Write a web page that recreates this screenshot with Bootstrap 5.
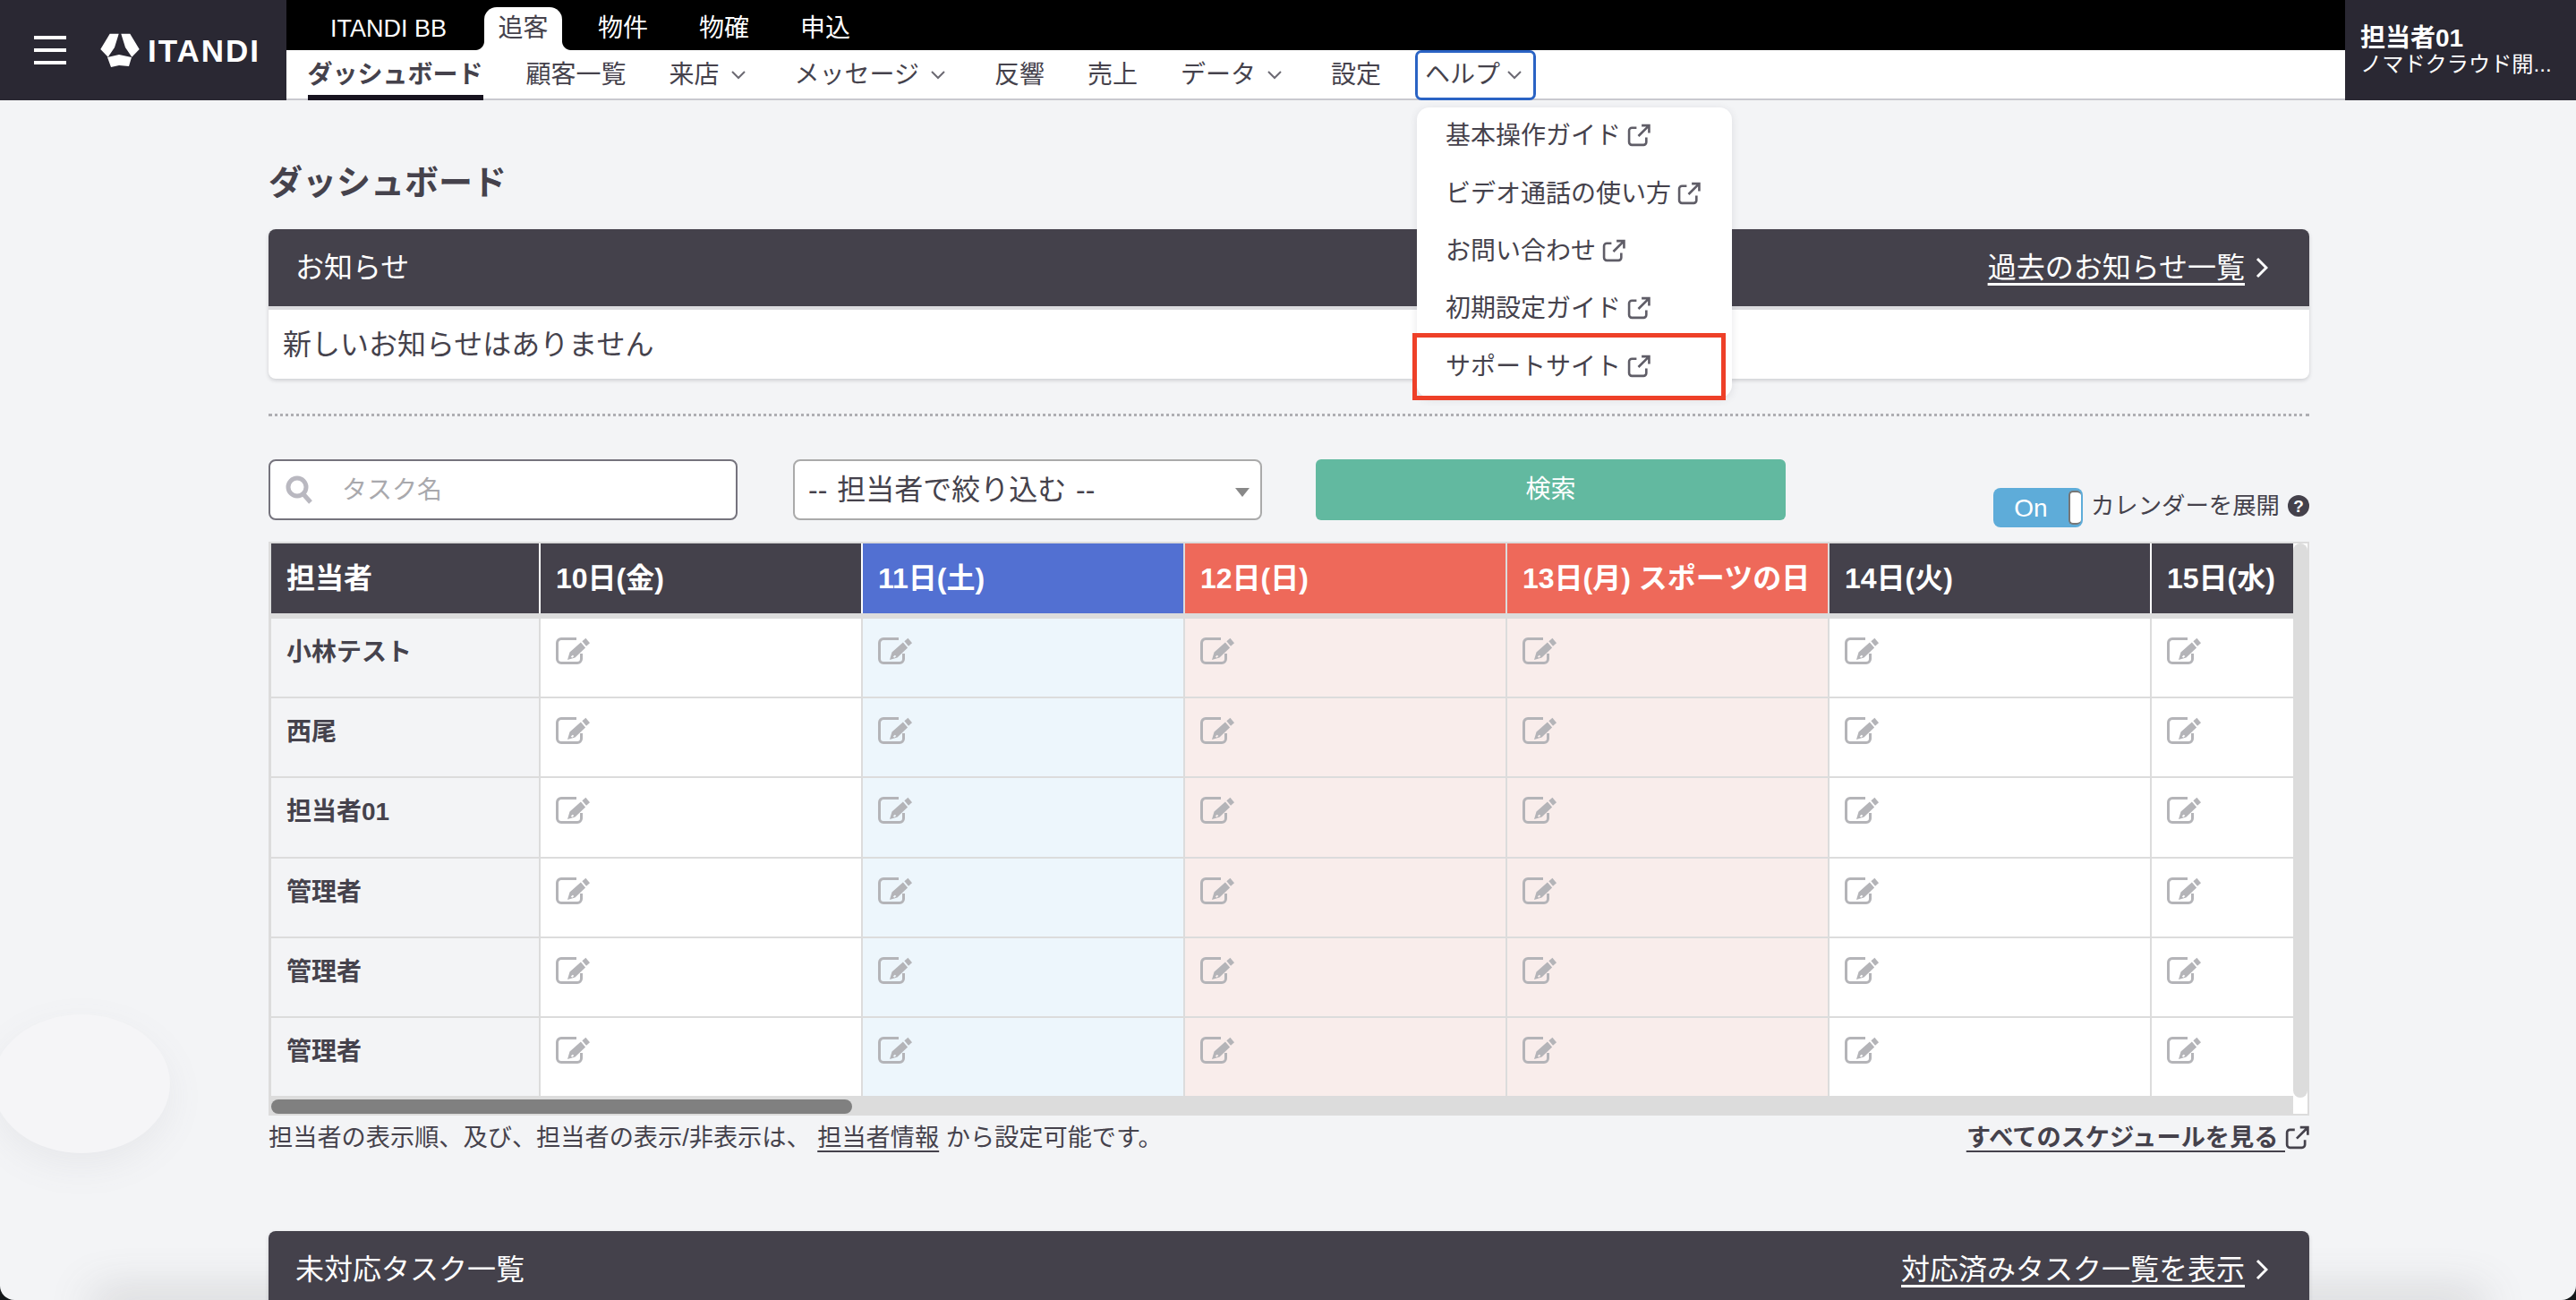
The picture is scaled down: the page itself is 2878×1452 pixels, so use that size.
<!doctype html>
<html lang="ja">
<head>
<meta charset="utf-8">
<title>ITANDI</title>
<link rel="stylesheet" href="https://cdn.jsdelivr.net/npm/bootstrap@5.3.0/dist/css/bootstrap.min.css">
<style>
html,body{height:100%;}
body{background:#f3f4f6;color:#45424c;font-family:"Liberation Sans","Noto Sans CJK JP",sans-serif;font-size:32px;line-height:1.4;overflow:hidden;position:relative;}
a{color:inherit;}
.app-top{height:112px;position:relative;z-index:1;}
.brand-side{width:320px;background:#2a2833;padding-left:38px;gap:38px;}
.burger{width:36px;height:32px;display:flex;flex-direction:column;justify-content:space-between;}
.burger i{display:block;height:4px;background:#fff;}
.logo-word{color:#fff;font-weight:700;font-size:35px;letter-spacing:2px;line-height:1;margin-left:9px;}
.nav-mid{min-width:0;}
.tier-one{height:56px;background:#000;}
.tier-one a{color:#fff;text-decoration:none;font-size:28px;height:48px;display:flex;align-items:center;line-height:1;white-space:nowrap;}
.tier-one .first-tab{font-size:27px;margin-left:49px;margin-right:42px;}
.tier-one a.on-tab{background:#fff;color:#45424c;border-radius:14px 14px 0 0;padding:0 15.500px;margin-right:40px;position:relative;}
.on-tab::before,.on-tab::after{content:"";position:absolute;bottom:0;width:10px;height:10px;}
.on-tab::before{left:-10px;background:radial-gradient(circle at 0 0,transparent 9.500px,#fff 10.500px);}
.on-tab::after{right:-10px;background:radial-gradient(circle at 100% 0,transparent 9.500px,#fff 10.500px);}
.tier-one .plain-tab{margin-right:57px;}
.tier-two{height:56px;background:#fff;border-bottom:2px solid #c9c9cf;padding-left:23.500px;}
.tier-two a{color:#45424c;text-decoration:none;font-size:28px;line-height:1;display:flex;align-items:center;height:56px;margin-bottom:-2px;white-space:nowrap;}
.tier-two .chev{margin-left:13px;margin-right:7px;}
.tier-two a.now{font-weight:700;border-bottom:6px solid #17131f;padding-top:6px;}
.tier-two a.help-open{border:3px solid #2a63c4;border-radius:7px;padding:0 13px 0 8px;margin-left:-10px;}
.help-open .chev{margin-left:8px !important;margin-right:0 !important;}
.user-side{width:258px;background:#2a2833;color:#fff;padding:29px 16px 0 17px;line-height:1;}
.user-side b{font-size:28px;display:block;}
.user-side span{font-size:24.200px;display:block;margin-top:3px;white-space:nowrap;}
.help-menu{position:absolute;left:1583px;top:120px;width:352px;height:324px;background:#fff;border-radius:14px;box-shadow:0 2px 10px rgba(60,60,70,.12);z-index:5;}
.help-menu a{display:flex;align-items:center;height:64.400px;padding-left:32px;font-size:28px;color:#45424c;text-decoration:none;gap:7px;line-height:1;white-space:nowrap;}
.help-menu a svg{color:#5f5d67;margin-top:-2px;}
.red-mark{position:absolute;left:1578px;top:372px;width:350px;height:75px;border:5px solid #ee4028;z-index:6;pointer-events:none;}
.page-wrap{width:2280px;margin-left:300px;position:relative;z-index:1;}
.page-title{font-size:38px;font-weight:700;line-height:1;margin:0;padding-top:73px;height:144px;}
.dark-panel{border-radius:8px;background:#fff;box-shadow:0 2px 4px rgba(60,60,70,.2);overflow:hidden;}
.panel-head{height:90px;background:#44414b;border-bottom:4px solid #dcdcdf;color:#fff;padding:0 46px 0 30px;}
.panel-head a{color:#fff;text-underline-offset:6px;text-decoration-thickness:3px;}
.panel-head span,.panel-head a{line-height:1;}
.link-with-chev{gap:12px;}
.panel-body-line{height:77px;padding-left:16px;display:flex;align-items:center;line-height:1;}
.dot-rule{border-top:3px dotted #aeaeb2;margin-top:39px;height:0;}
.filter-row{margin-top:48px;height:68px;position:relative;}
.search-box{width:524px;height:68px;border:2.500px solid #75737d;border-radius:8px;background:#fff;padding-left:17px;gap:33px;color:#a9a9ad;font-size:28px;line-height:1;}
.search-box span{margin-top:1px;}
.pick-box{width:524px;height:68px;border:2px solid #aaa;border-radius:8px;background:#fff;margin-left:62px;padding:0 12px 0 15px;font-size:32px;line-height:1;}
.pick-box>span:first-child{word-spacing:2px;}
.pick-arrow{width:0;height:0;border-left:8px solid transparent;border-right:8px solid transparent;border-top:10px solid #888;margin-top:6px;}
.go-btn{width:525px;height:68px;margin-left:60px;background:#62b9a0;border:0;border-radius:6px;color:#fff;font-size:28px;line-height:1;}
.expand-line{position:absolute;right:0;top:32px;height:44px;font-size:26.400px;line-height:1;}
.flip{width:100px;height:44px;background:#5eacd9;border-radius:8px;color:#fff;font-size:28px;margin-right:9px;position:relative;padding:2px 16px 0 0;line-height:1;}
.flip i{position:absolute;right:2px;top:3px;width:14px;height:38px;background:#fff;border:2px solid #777;border-right:0;border-radius:5px;}
.label-up{margin-bottom:3px;}
.q-mark{width:24px;height:24px;border-radius:50%;background:#44414b;color:#fff;font-size:19px;font-weight:700;margin-left:9px;margin-bottom:4px;line-height:1;}
.sched-frame{margin-top:24px;height:641px;border:3px solid #dcdcdc;border-right-width:2px;border-top-width:2px;border-bottom-width:2px;background:#dcdcdc;position:relative;overflow:hidden;}
.sched-grid{display:grid;grid-template-columns:301px repeat(6,360px);width:2461px;height:619px;grid-template-rows:84px repeat(6,89.200px);}
.hc{height:78px;color:#fff;font-weight:700;font-size:32px;display:flex;align-items:center;padding-left:17px;border-right:2px solid #fff;line-height:1;white-space:nowrap;background:#44414b;}
.hc.sat{background:#5270d2;border-right-color:#dcdcdc;}
.hc.hol{background:#ee695a;border-right-color:#dcdcdc;}
.bc{border-right:2px solid #dcdcdc;border-bottom:2px solid #dcdcdc;background:#fff;padding:21px 0 0 17px;line-height:1;}
.bc svg{display:block;}
.bc.who{background:#f3f4f6;font-size:28px;font-weight:700;padding-top:24px;}
.bc.sat{background:#edf6fc;}
.bc.hol{background:#f9edeb;}
.rail-back{position:absolute;right:0;top:0;bottom:0;width:16px;background:#fff;}
.rail-y{position:absolute;right:0;top:0;bottom:18px;width:16px;background:#dcdcdc;border-radius:8px;}
.rail-x{position:absolute;left:0;right:16px;bottom:0;height:18px;background:#dcdcdc;border-radius:0 9px 9px 0;}
.rail-x i{position:absolute;left:0;top:2px;width:649px;height:16px;background:#808080;border-radius:8px;}
.note-line{height:42px;font-size:27.200px;line-height:1;margin-top:4px;}
.note-line a{text-underline-offset:5px;text-decoration-thickness:2px;}
.next-panel{margin-top:83px;border-radius:8px 8px 0 0;}
.blob{position:absolute;left:-8px;top:1133px;width:198px;height:155px;background:#f5f5f7;border-radius:50%;box-shadow:0 14px 40px rgba(120,120,130,.09);z-index:0;}
.fade-edge{position:absolute;left:110px;right:110px;bottom:-20px;height:20px;box-shadow:0 -2px 50px 6px rgba(90,90,96,.24);z-index:0;pointer-events:none;}
.window-mask{position:absolute;inset:0;border-radius:0 0 16px 16px;box-shadow:0 0 0 40px #15181a;z-index:9;pointer-events:none;}
</style>
</head>
<body>
<div class="d-flex app-top">
  <div class="brand-side d-flex align-items-center">
    <div class="burger"><i></i><i></i><i></i></div>
    <div class="d-flex align-items-center">
      <svg width="44" height="38" viewBox="0 0 44 38"><path fill="#fff" d="M10.700.7h10L16 16 8.700 26.700.3 18zM33.300.7h-10L28 16l7.300 10.700L43.700 18zM8 27l13-3 14 3-3 10-11-1-9 2z"/></svg>
      <span class="logo-word">ITANDI</span>
    </div>
  </div>
  <div class="nav-mid flex-grow-1">
    <div class="tier-one d-flex align-items-end">
      <a class="first-tab" href="#">ITANDI BB</a>
      <a class="on-tab" href="#">追客</a>
      <a class="plain-tab" href="#">物件</a>
      <a class="plain-tab" href="#">物確</a>
      <a class="plain-tab" href="#">申込</a>
    </div>
    <div class="tier-two d-flex gap-5">
      <a class="now" href="#">ダッシュボード</a>
      <a href="#">顧客一覧</a>
      <a href="#">来店<svg class="chev" width="16" height="10" viewBox="0 0 16 10"><path d="M1 1l7 7 7-7" fill="none" stroke="#6c6a73" stroke-width="2"/></svg></a>
      <a href="#">メッセージ<svg class="chev" width="16" height="10" viewBox="0 0 16 10"><path d="M1 1l7 7 7-7" fill="none" stroke="#6c6a73" stroke-width="2"/></svg></a>
      <a href="#">反響</a>
      <a href="#">売上</a>
      <a href="#">データ<svg class="chev" width="16" height="10" viewBox="0 0 16 10"><path d="M1 1l7 7 7-7" fill="none" stroke="#6c6a73" stroke-width="2"/></svg></a>
      <a href="#">設定</a>
      <a class="help-open" href="#">ヘルプ<svg class="chev" width="16" height="10" viewBox="0 0 16 10"><path d="M1 1l7 7 7-7" fill="none" stroke="#6c6a73" stroke-width="2"/></svg></a>
    </div>
  </div>
  <div class="user-side"><b>担当者01</b><span>ノマドクラウド開...</span></div>
</div>

<div class="help-menu">
  <a href="#">基本操作ガイド<svg width="26" height="26" viewBox="0 0 25 25"><path d="M10 4.500H5a3 3 0 0 0-3 3V20a3 3 0 0 0 3 3h12.500a3 3 0 0 0 3-3v-5M12 13.500L23 2.500M15.500 2h8v8" fill="none" stroke="currentColor" stroke-width="2.500"/></svg></a>
  <a href="#">ビデオ通話の使い方<svg width="26" height="26" viewBox="0 0 25 25"><path d="M10 4.500H5a3 3 0 0 0-3 3V20a3 3 0 0 0 3 3h12.500a3 3 0 0 0 3-3v-5M12 13.500L23 2.500M15.500 2h8v8" fill="none" stroke="currentColor" stroke-width="2.500"/></svg></a>
  <a href="#">お問い合わせ<svg width="26" height="26" viewBox="0 0 25 25"><path d="M10 4.500H5a3 3 0 0 0-3 3V20a3 3 0 0 0 3 3h12.500a3 3 0 0 0 3-3v-5M12 13.500L23 2.500M15.500 2h8v8" fill="none" stroke="currentColor" stroke-width="2.500"/></svg></a>
  <a href="#">初期設定ガイド<svg width="26" height="26" viewBox="0 0 25 25"><path d="M10 4.500H5a3 3 0 0 0-3 3V20a3 3 0 0 0 3 3h12.500a3 3 0 0 0 3-3v-5M12 13.500L23 2.500M15.500 2h8v8" fill="none" stroke="currentColor" stroke-width="2.500"/></svg></a>
  <a href="#">サポートサイト<svg width="26" height="26" viewBox="0 0 25 25"><path d="M10 4.500H5a3 3 0 0 0-3 3V20a3 3 0 0 0 3 3h12.500a3 3 0 0 0 3-3v-5M12 13.500L23 2.500M15.500 2h8v8" fill="none" stroke="currentColor" stroke-width="2.500"/></svg></a>
</div>
<div class="red-mark"></div>
<div class="blob"></div>
<div class="fade-edge"></div>

<main class="page-wrap">
  <h1 class="page-title">ダッシュボード</h1>
  <section class="dark-panel">
    <div class="panel-head d-flex justify-content-between align-items-center">
      <span>お知らせ</span>
      <span class="d-flex align-items-center link-with-chev"><a href="#">過去のお知らせ一覧</a><svg width="14" height="24" viewBox="0 0 14 24"><path d="M2 2l10 10L2 22" fill="none" stroke="#fff" stroke-width="3"/></svg></span>
    </div>
    <div class="panel-body-line">新しいお知らせはありません</div>
  </section>
  <div class="dot-rule"></div>

  <div class="filter-row d-flex">
    <div class="search-box d-flex align-items-center">
      <svg width="30" height="32" viewBox="0 0 30 32"><circle cx="13" cy="13" r="10" fill="none" stroke="#b9b8c0" stroke-width="5"/><path d="M20 21l8 9" stroke="#b9b8c0" stroke-width="5"/></svg>
      <span>タスク名</span>
    </div>
    <div class="pick-box d-flex align-items-center justify-content-between">
      <span>-- 担当者で絞り込む --</span><span class="pick-arrow"></span>
    </div>
    <button class="go-btn" type="button">検索</button>
    <div class="expand-line d-flex align-items-center">
      <span class="flip d-flex align-items-center justify-content-center">On<i></i></span>
      <span class="label-up">カレンダーを展開</span>
      <span class="q-mark d-flex align-items-center justify-content-center">?</span>
    </div>
  </div>

  <div class="sched-frame">
    <div class="sched-grid" id="grid"></div>
    <div class="rail-back"></div>
    <div class="rail-y"></div>
    <div class="rail-x"><i></i></div>
  </div>

  <div class="note-line d-flex justify-content-between align-items-center">
    <span>担当者の表示順、及び、担当者の表示/非表示は、 <a href="#">担当者情報</a> から設定可能です。</span>
    <a href="#" class="fw-bold d-flex align-items-center"><span class="text-decoration-underline">すべてのスケジュールを見る&nbsp;</span><svg width="27" height="27" viewBox="0 0 25 25"><path d="M10 4.500H5a3 3 0 0 0-3 3V20a3 3 0 0 0 3 3h12.500a3 3 0 0 0 3-3v-5M12 13.500L23 2.500M15.500 2h8v8" fill="none" stroke="#45424c" stroke-width="2.500"/></svg></a>
  </div>

  <section class="dark-panel next-panel">
    <div class="panel-head d-flex justify-content-between align-items-center">
      <span>未対応タスク一覧</span>
      <span class="d-flex align-items-center link-with-chev"><a href="#">対応済みタスク一覧を表示</a><svg width="14" height="24" viewBox="0 0 14 24"><path d="M2 2l10 10L2 22" fill="none" stroke="#fff" stroke-width="3"/></svg></span>
    </div>
  </section>
</main>
<div class="window-mask"></div>
<script src="https://cdn.jsdelivr.net/npm/bootstrap@5.3.0/dist/js/bootstrap.bundle.min.js"></script>
<script>
var pen='<svg width="38" height="30" viewBox="0 0 38 30"><path d="M23 1.500H6A4.500 4.500 0 0 0 1.500 6v18A4.500 4.500 0 0 0 6 28.500h18a4.500 4.500 0 0 0 4.500-4.500v-6" fill="none" stroke="#b4b4b8" stroke-width="3"/><path fill="#b4b4b8" fill-rule="evenodd" d="M13 25l2.500-8.500L27.900 5.500l5.200 6L21.500 22.500zM16.800 21.500l1.500 1.300 2-1.800-1.500-1.300z"/><path fill="#b4b4b8" d="M29.400 4.200l4-3.500 4.600 5.500-4 3.500z"/></svg>';
var heads=[['担当者',''],['10日(金)',''],['11日(土)','sat'],['12日(日)','hol'],['13日(月) スポーツの日','hol'],['14日(火)',''],['15日(水)','']];
var people=['小林テスト','西尾','担当者01','管理者','管理者','管理者'];
var h='';
heads.forEach(function(c){h+='<div class="hc '+c[1]+'">'+c[0]+'</div>';});
people.forEach(function(p){
  h+='<div class="bc who">'+p+'</div>';
  heads.slice(1).forEach(function(c){h+='<div class="bc '+c[1]+'">'+pen+'</div>';});
});
document.getElementById('grid').innerHTML=h;
</script>
</body>
</html>
